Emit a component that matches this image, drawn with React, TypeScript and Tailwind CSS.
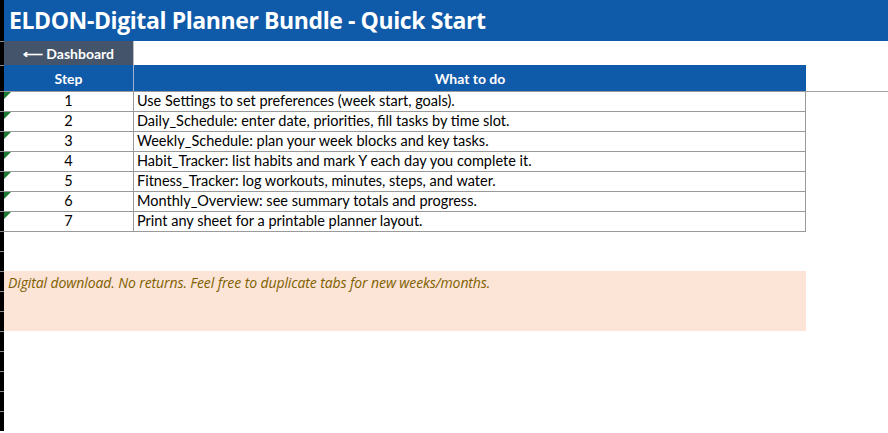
const steps = [
  'Use Settings to set preferences (week start, goals).',
  'Daily_Schedule: enter date, priorities, fill tasks by time slot.',
  'Weekly_Schedule: plan your week blocks and key tasks.',
  'Habit_Tracker: list habits and mark Y each day you complete it.',
  'Fitness_Tracker: log workouts, minutes, steps, and water.',
  'Monthly_Overview: see summary totals and progress.',
  'Print any sheet for a printable planner layout.',
];

function Gutter() {
  return <div className="w-[4px] shrink-0 bg-black border-t border-[#8a8a8a]" />;
}

export default function App() {
  const body = { fontFamily: 'Lato, "Open Sans", sans-serif' };

  return (
    <div className="w-[888px] h-[433px] overflow-hidden bg-white flex flex-col" style={body}>
      {/* title */}
      <div className="flex h-[41px] shrink-0">
        <div className="w-[4px] shrink-0 bg-black" />
        <div
          className="flex-1 bg-[#0f5aa9] text-white font-bold text-[23px] pl-[5px] flex items-center"
          style={{ fontFamily: '"Open Sans", sans-serif', letterSpacing: '-0.4px' }}
        >
          ELDON-Digital Planner Bundle - Quick Start
        </div>
      </div>

      {/* dashboard link */}
      <div className="flex h-[24px] shrink-0">
        <Gutter />
        <div className="w-[130px] bg-[#44546a] text-white font-bold text-[14px] flex items-center justify-center border-r border-[#bfbfbf]">
          ⟵ Dashboard
        </div>
        <div className="flex-1" />
      </div>

      {/* header */}
      <div className="flex h-[26px] shrink-0">
        <Gutter />
        <div className="w-[130px] bg-[#0f5aa9] text-white font-bold text-[14px] flex items-center justify-center border-r border-[#9db4d2] pt-[1px]">
          Step
        </div>
        <div className="w-[672px] bg-[#0f5aa9] text-white font-bold text-[14px] flex items-center justify-center pt-[1px]">
          What to do
        </div>
        <div className="flex-1" />
      </div>

      {/* steps */}
      {steps.map((s, i) => (
        <div key={i} className="flex h-[20px] shrink-0">
          <Gutter />
          <div className="relative w-[130px] border-t border-r border-[#9a9a9a] text-[14.5px] text-black flex items-center justify-center leading-none">
            <span className="absolute left-0 top-0 w-0 h-0 border-t-[7px] border-r-[7px] border-t-[#1e7b34] border-r-transparent" />
            {i + 1}
          </div>
          <div className="w-[672px] border-t border-r border-[#9a9a9a] text-[14.5px] text-black flex items-center pl-[3px] leading-none">
            {s}
          </div>
          <div className={`flex-1 ${i === 0 ? 'border-t border-[#a6a6a6]' : ''}`} />
        </div>
      ))}

      {/* blank rows */}
      <div className="flex h-[20px] shrink-0">
        <Gutter />
        <div className="w-[802px] border-t border-[#9a9a9a]" />
        <div className="flex-1" />
      </div>
      <div className="flex h-[20px] shrink-0">
        <Gutter />
        <div className="flex-1" />
      </div>

      {/* note */}
      <div className="flex h-[60px] shrink-0">
        <div className="w-[4px] shrink-0 bg-black flex flex-col">
          <div className="h-[20px] border-t border-[#8a8a8a]" />
          <div className="h-[20px] border-t border-[#8a8a8a]" />
          <div className="h-[20px] border-t border-[#8a8a8a]" />
        </div>
        <div
          className="w-[802px] bg-[#fce4d6] text-[#7f6000] italic text-[14px] pl-[4px] pt-[1px]"
          style={{ fontFamily: '"Open Sans", sans-serif', letterSpacing: '-0.1px' }}
        >
          Digital download. No returns. Feel free to duplicate tabs for new weeks/months.
        </div>
        <div className="flex-1" />
      </div>

      {/* remaining rows */}
      {[0, 1, 2, 3, 4].map((k) => (
        <div key={k} className="flex h-[20px] shrink-0">
          <Gutter />
          <div className="flex-1" />
        </div>
      ))}
    </div>
  );
}
